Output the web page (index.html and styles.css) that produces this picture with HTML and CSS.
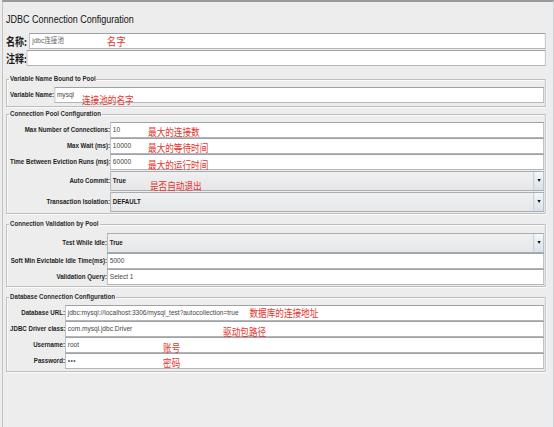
FILE: index.html
```html
<!DOCTYPE html>
<html lang="zh">
<head>
<meta charset="utf-8">
<title>JDBC Connection Configuration</title>
<link rel="stylesheet" href="styles.css">
</head>
<body>
<div class="page">
  <div class="title">JDBC Connection Configuration</div>

  <div class="row top-row">
    <span class="cn-label">名称:</span>
    <div class="field field-name">jdbc连接池</div>
    <span class="note note-name">名字</span>
  </div>
  <div class="row top-row">
    <span class="cn-label">注释:</span>
    <div class="field field-comment"></div>
  </div>

  <fieldset class="group g-var">
    <legend>Variable Name Bound to Pool</legend>
    <div class="row">
      <span class="label label-auto">Variable Name:</span>
      <div class="field">mysql</div>
      <span class="note note-var">连接池的名字</span>
    </div>
  </fieldset>

  <fieldset class="group g-pool">
    <legend>Connection Pool Configuration</legend>
    <div class="row">
      <span class="label">Max Number of Connections:</span>
      <div class="field">10</div>
      <span class="note note-max">最大的连接数</span>
    </div>
    <div class="row">
      <span class="label">Max Wait (ms):</span>
      <div class="field">10000</div>
      <span class="note note-wait">最大的等待时间</span>
    </div>
    <div class="row">
      <span class="label">Time Between Eviction Runs (ms):</span>
      <div class="field">60000</div>
      <span class="note note-evict">最大的运行时间</span>
    </div>
    <div class="row row-combo">
      <span class="label">Auto Commit:</span>
      <div class="combo"><span class="combo-text">True</span><span class="combo-btn"><span class="arrow"></span></span></div>
      <span class="note note-auto">是否自动退出</span>
    </div>
    <div class="row row-combo">
      <span class="label">Transaction Isolation:</span>
      <div class="combo"><span class="combo-text">DEFAULT</span><span class="combo-btn"><span class="arrow"></span></span></div>
    </div>
  </fieldset>

  <fieldset class="group g-valid">
    <legend>Connection Validation by Pool</legend>
    <div class="row row-combo">
      <span class="label">Test While Idle:</span>
      <div class="combo"><span class="combo-text">True</span><span class="combo-btn"><span class="arrow"></span></span></div>
    </div>
    <div class="row">
      <span class="label">Soft Min Evictable Idle Time(ms):</span>
      <div class="field">5000</div>
    </div>
    <div class="row">
      <span class="label">Validation Query:</span>
      <div class="field">Select 1</div>
    </div>
  </fieldset>

  <fieldset class="group g-db">
    <legend>Database Connection Configuration</legend>
    <div class="row">
      <span class="label">Database URL:</span>
      <div class="field">jdbc:mysql://localhost:3306/mysql_test?autocollection=true</div>
      <span class="note note-url">数据库的连接地址</span>
    </div>
    <div class="row">
      <span class="label">JDBC Driver class:</span>
      <div class="field">com.mysql.jdbc.Driver</div>
      <span class="note note-driver">驱动包路径</span>
    </div>
    <div class="row">
      <span class="label">Username:</span>
      <div class="field">root</div>
      <span class="note note-user">账号</span>
    </div>
    <div class="row">
      <span class="label">Password:</span>
      <div class="field field-pass">•••</div>
      <span class="note note-pass">密码</span>
    </div>
  </fieldset>
</div>
</body>
</html>
```

FILE: styles.css
```css
html, body {
  margin: 0;
  padding: 0;
  background: #ededed;
  overflow: hidden;
  width: 554px;
  height: 427px;
}

/* The whole panel is drawn horizontally condensed (as in the reference),
   so it is laid out at full width and squeezed along x. */
.page {
  box-sizing: border-box;
  width: 673.2px;
  height: 427px;
  margin-left: 2px;
  padding: 0 8.8px 0 3.9px;
  border-top: 2px solid #9a9a9a;
  border-left: 1px solid #b9b9b9;
  border-right: 1px solid #c9cfd6;
  background: #ededed;
  font-family: "Liberation Sans", Arial, sans-serif;
  color: #1e1e1e;
  overflow: hidden;
  transform: scaleX(0.82);
  transform-origin: 0 0;
}

.title {
  height: 27px;
  padding-top: 4px;
  line-height: 27px;
  font-size: 11px;
  color: #111;
}

.row {
  position: relative;
  display: flex;
  align-items: center;
  height: 16px;
}

.top-row {
  margin-bottom: 1px;
}

.cn-label {
  font-family: "Noto Sans CJK SC", sans-serif;
  font-weight: bold;
  font-size: 11px;
  line-height: 16px;
  color: #1a1a1a;
  padding-right: 3px;
}

.field {
  flex: 1;
  box-sizing: border-box;
  height: 16px;
  padding-left: 2.4px;
  background: #fff;
  border: 1px solid #b2b5ba;
  border-top-color: #9ea1a6;
  font-family: "Liberation Sans", "Noto Sans CJK SC", sans-serif;
  font-size: 8px;
  line-height: 14px;
  color: #444;
  white-space: nowrap;
  overflow: hidden;
}

.field-name {
  color: #666;
}

.field-comment {
  margin-left: -3.5px;
}

.field-pass {
  letter-spacing: 0.5px;
  color: #555;
}

.group {
  margin: 0;
  padding: 3px 1.2px 1px 3.9px;
  border: 1px solid #bdbdbd;
  box-shadow: inset 1px 1px 0 #fbfbfb, 1px 1px 0 #fbfbfb;
  min-width: 0;
}

.group legend {
  padding: 0 1px;
  margin-left: -1px;
  font-weight: bold;
  font-size: 7.5px;
  line-height: 10px;
  color: #2a2a2a;
}

.g-var {
  margin-top: 8px;
  padding-bottom: 3px;
}

.g-pool {
  margin-top: 2px;
  --lw: 122px;
}

.g-valid {
  margin-top: 5px;
  --lw: 118.3px;
}

.g-db {
  margin-top: 5px;
  padding-bottom: 2px;
  --lw: 67px;
}

.label {
  flex: none;
  width: var(--lw);
  text-align: right;
  font-weight: bold;
  font-size: 7.5px;
  line-height: 16px;
  color: #1e1e1e;
  white-space: nowrap;
}

.label-auto {
  width: auto;
}

.row-combo {
  height: 21px;
}

.combo {
  flex: 1;
  display: flex;
  box-sizing: border-box;
  height: 20px;
  border: 1px solid #a9acb1;
  background: linear-gradient(#f0f0f0, #e6e7e9);
}

.combo-text {
  flex: 1;
  padding-left: 2.4px;
  font-weight: bold;
  font-size: 7.5px;
  line-height: 18px;
  color: #222;
}

.combo-btn {
  flex: none;
  width: 11px;
  display: flex;
  align-items: center;
  justify-content: center;
  border-left: 1px solid #c0c5cc;
  background: linear-gradient(#f4f7fb, #d9e1ea);
}

.arrow {
  width: 0;
  height: 0;
  border-left: 2.6px solid transparent;
  border-right: 2.6px solid transparent;
  border-top: 3px solid #111;
}

.note {
  position: absolute;
  font-family: "Noto Sans CJK SC", sans-serif;
  font-size: 10.5px;
  line-height: 11px;
  color: #e3342c;
  white-space: nowrap;
}

.note-name   { left: 123px;   top: 3px; font-size: 11.5px; }
.note-var    { left: 87.8px;  top: 7px; }
.note-max    { left: 168.3px; top: 4px; }
.note-wait   { left: 168.3px; top: 4px; }
.note-evict  { left: 168.3px; top: 5px; }
.note-auto   { left: 170.7px; top: 10px; }
.note-url    { left: 292px;   top: 2px; }
.note-driver { left: 259.8px; top: 5px; }
.note-user   { left: 186.6px; top: 5px; }
.note-pass   { left: 186.6px; top: 4px; }
```
